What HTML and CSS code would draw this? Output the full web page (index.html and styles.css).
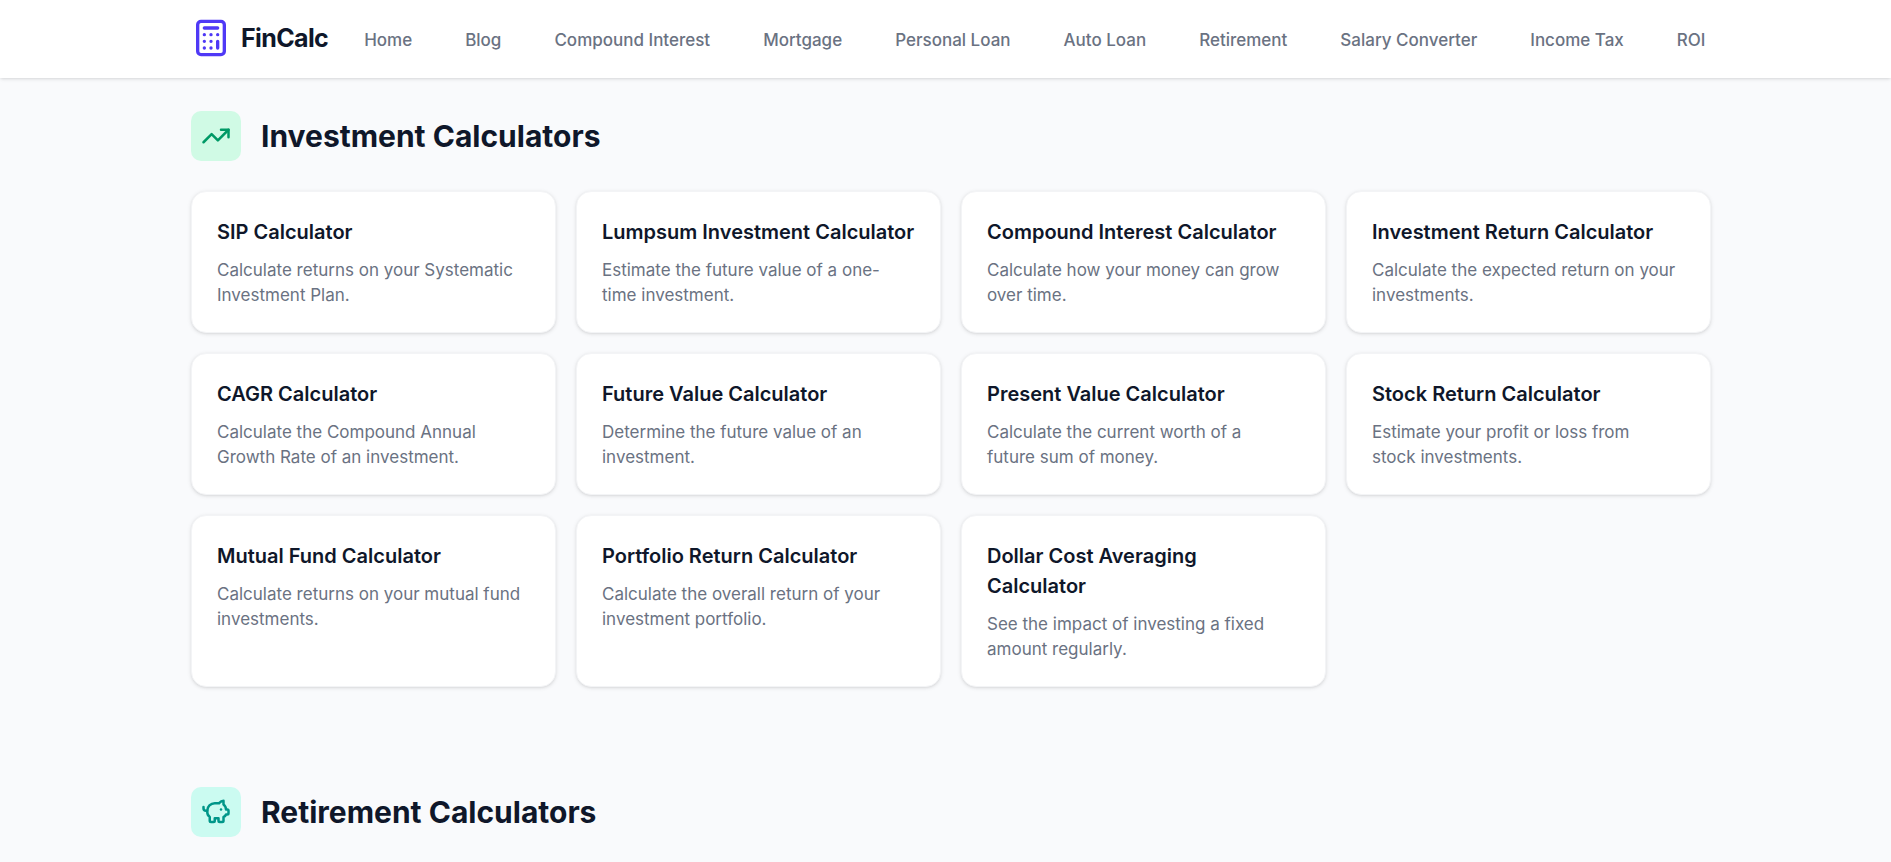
FILE: index.html
```html
<!DOCTYPE html>
<html lang="en">
<head>
<meta charset="utf-8">
<title>FinCalc</title>
<link rel="stylesheet" href="styles.css">
</head>
<body>
<header class="header">
  <div class="container header-inner">
    <a class="brand" href="#">
      <svg class="brand-icon" viewBox="0 0 24 24" aria-hidden="true"><rect width="16" height="20" x="4" y="2" rx="2"/><path d="M8 6h8M16 14v4M16 10h.01M12 10h.01M8 10h.01M12 14h.01M8 14h.01M12 18h.01M8 18h.01"/></svg>
      <span>FinCalc</span>
    </a>
    <nav class="nav">
      <a href="#">Home</a>
      <a href="#">Blog</a>
      <a href="#">Compound Interest</a>
      <a href="#">Mortgage</a>
      <a href="#">Personal Loan</a>
      <a href="#">Auto Loan</a>
      <a href="#">Retirement</a>
      <a href="#">Salary Converter</a>
      <a href="#">Income Tax</a>
      <a href="#">ROI</a>
    </nav>
  </div>
</header>
<main class="container main">
  <section>
    <div class="section-head">
      <span class="badge badge-green"><svg viewBox="0 0 24 24" aria-hidden="true"><path d="M22 7 13.5 15.5 8.5 10.5 2 17"/><path d="M16 7h6v6"/></svg></span>
      <h2>Investment Calculators</h2>
    </div>
    <div class="grid">
      <a class="card" href="#"><h3>SIP Calculator</h3><p>Calculate returns on your Systematic Investment Plan.</p></a>
      <a class="card" href="#"><h3>Lumpsum Investment Calculator</h3><p>Estimate the future value of a one-time investment.</p></a>
      <a class="card" href="#"><h3>Compound Interest Calculator</h3><p>Calculate how your money can grow over time.</p></a>
      <a class="card" href="#"><h3>Investment Return Calculator</h3><p>Calculate the expected return on your investments.</p></a>
      <a class="card" href="#"><h3>CAGR Calculator</h3><p>Calculate the Compound Annual Growth Rate of an investment.</p></a>
      <a class="card" href="#"><h3>Future Value Calculator</h3><p>Determine the future value of an investment.</p></a>
      <a class="card" href="#"><h3>Present Value Calculator</h3><p>Calculate the current worth of a future sum of money.</p></a>
      <a class="card" href="#"><h3>Stock Return Calculator</h3><p>Estimate your profit or loss from stock investments.</p></a>
      <a class="card" href="#"><h3>Mutual Fund Calculator</h3><p>Calculate returns on your mutual fund investments.</p></a>
      <a class="card" href="#"><h3>Portfolio Return Calculator</h3><p>Calculate the overall return of your investment portfolio.</p></a>
      <a class="card" href="#"><h3>Dollar Cost Averaging Calculator</h3><p>See the impact of investing a fixed amount regularly.</p></a>
    </div>
  </section>
  <section>
    <div class="section-head">
      <span class="badge badge-teal"><svg viewBox="0 0 24 24" aria-hidden="true"><path d="M11 17h3v2a1 1 0 0 0 1 1h2a1 1 0 0 0 1-1v-3a3.160 3.160 0 0 0 2-2h1a1 1 0 0 0 1-1v-2a1 1 0 0 0-1-1h-1a5 5 0 0 0-2-4V3a4 4 0 0 0-3.200 1.600l-.3.4H11a6 6 0 0 0-6 6v1a5 5 0 0 0 2 4v3a1 1 0 0 0 1 1h2a1 1 0 0 0 1-1z"/><path d="M16 10h.01"/><path d="M2 8v1a2 2 0 0 0 2 2h1"/></svg></span>
      <h2>Retirement Calculators</h2>
    </div>
  </section>
</main>
</body>
</html>
```
FILE: styles.css
```css
* { box-sizing: border-box; margin: 0; padding: 0; }
html { overflow: hidden; }
body { font-family: Inter, sans-serif; background: #f9fafc; color: #0f172a; font-size: 16px; line-height: 24px; }
a { color: inherit; text-decoration: none; }
svg { display: block; fill: none; stroke: currentColor; stroke-width: 2; stroke-linecap: round; stroke-linejoin: round; }
.container { max-width: 1583px; margin: 0 auto; padding: 0 26px 0 37px; }
.header { background: #fff; box-shadow: 0 1px 4px rgba(0,0,0,.1), 0 1px 3px -1px rgba(0,0,0,.1); }
.header-inner { display: flex; align-items: flex-start; height: 78px; gap: 36px; }
.brand { display: flex; align-items: center; gap: 10px; padding-top: 18px; font-size: 25px; line-height: 35px; font-weight: 700; letter-spacing: -0.025em; }
.brand-icon { width: 40px; height: 40px; color: #4f39f6; }
.nav { display: flex; gap: 53px; padding-top: 28px; color: #6a7282; font-size: 17px; font-weight: 500; white-space: nowrap; }
.main { display: grid; gap: 100px; padding-top: 33px; }
.section-head { display: flex; align-items: center; gap: 20px; margin-bottom: 30px; }
.section-head h2 { font-size: 30px; line-height: 36px; font-weight: 700; }
.badge { padding: 10px; border-radius: 10px; }
.badge svg { width: 30px; height: 30px; }
.badge-green { background: #d0fae5; color: #009966; }
.badge-teal { background: #cbfbf1; color: #009689; }
.grid { display: grid; grid-template-columns: repeat(4, minmax(0, 1fr)); gap: 20px; }
.card { background: #fff; border: 1px solid #f3f4f6; border-radius: 15px; padding: 25px 25px 24px; box-shadow: 0 1px 4px rgba(0,0,0,.1), 0 1px 3px -1px rgba(0,0,0,.1); }
.card h3 { font-size: 20px; line-height: 30px; font-weight: 600; margin-bottom: 11px; }
.card p { padding-right: 8px; font-size: 17px; line-height: 25px; color: #6a7282; }
```
